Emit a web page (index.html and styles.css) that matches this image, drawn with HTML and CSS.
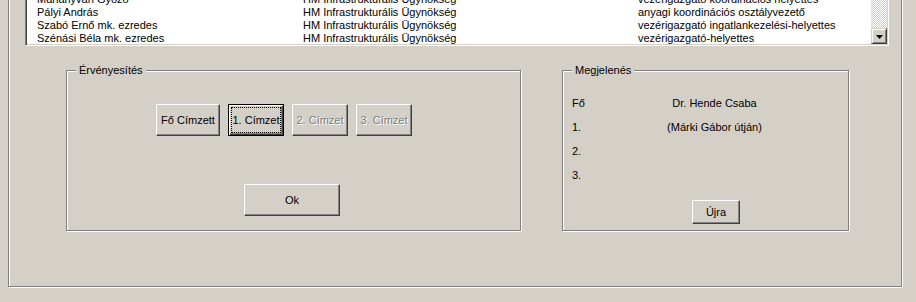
FILE: index.html
```html
<!DOCTYPE html>
<html lang="hu">
<head>
    <title>Érvényesítés</title>
    <meta charset="utf-8">
    <link rel="stylesheet" href="styles.css">
</head>
<body>
<div class="window">
    <div class="listbox">
        <div class="list">
            <div class="row"><span>Marianyván Győző</span><span>HM Infrastrukturális Ügynökség</span><span>vezérigazgató koordinációs helyettes</span></div>
            <div class="row"><span>Pályi András</span><span>HM Infrastrukturális Ügynökség</span><span>anyagi koordinációs osztályvezető</span></div>
            <div class="row"><span>Szabó Ernő mk. ezredes</span><span>HM Infrastrukturális Ügynökség</span><span>vezérigazgató ingatlankezelési-helyettes</span></div>
            <div class="row"><span>Szénási Béla mk. ezredes</span><span>HM Infrastrukturális Ügynökség</span><span>vezérigazgató-helyettes</span></div>
        </div>
        <div class="scrollbar">
            <div class="track"></div>
            <div class="scroll-btn">
                <svg width="7" height="4" viewBox="0 0 7 4"><polygon points="0,0 7,0 3.5,4" fill="#000"/></svg>
            </div>
        </div>
    </div>

    <div class="groups">
        <div class="group group-validate">
            <span class="group-title">Érvényesítés</span>
            <div class="btn-row">
                <button class="btn btn-wide" type="button">Fő Címzett</button>
                <button class="btn btn-default" type="button">1. Címzet</button>
                <button class="btn" type="button" disabled>2. Címzet</button>
                <button class="btn" type="button" disabled>3. Címzet</button>
            </div>
            <button class="btn btn-ok" type="button">Ok</button>
        </div>

        <div class="group group-view">
            <span class="group-title">Megjelenés</span>
            <div class="view-rows">
                <span>Fő</span><span class="view-value">Dr. Hende Csaba</span>
                <span>1.</span><span class="view-value">(Márki Gábor útján)</span>
                <span>2.</span><span class="view-value"></span>
                <span>3.</span><span class="view-value"></span>
            </div>
            <button class="btn btn-reset" type="button">Újra</button>
        </div>
    </div>
</div>
</body>
</html>
```

FILE: styles.css
```css
*, *::before, *::after {
    margin: 0;
    padding: 0;
    box-sizing: border-box;
}

body {
    height: 302px;
    overflow: hidden;
    background-color: #d4d0c8;
    color: #000000;
    font-family: "Liberation Sans", Arial, sans-serif;
    font-size: 11px;
}

.window {
    height: 313px;
    margin: -26px 14px 0 8px;
    padding: 15px 12px 0 16px;
    border: 1px solid #808080;
    box-shadow: inset 1px 1px 0 #ffffff, 1px 1px 0 #ffffff;
}

/* lista */
.listbox {
    display: flex;
    height: 56px;
    border: 1px solid;
    border-color: #808080 #ffffff #ffffff #808080;
    box-shadow: inset 1px 1px 0 #404040, inset -1px -1px 0 #d4d0c8;
    padding: 1px;
}

.list {
    flex: 1;
    background-color: #ffffff;
    padding-top: 1px;
}

.row {
    display: grid;
    grid-template-columns: 266px 335px 1fr;
    height: 13px;
    padding-left: 10px;
    line-height: 13px;
    white-space: nowrap;
}

.scrollbar {
    width: 16px;
    display: flex;
    flex-direction: column;
}

.track {
    flex: 1;
    background-image: conic-gradient(#ffffff 25%, #d4d0c8 0 50%, #ffffff 0 75%, #d4d0c8 0);
    background-size: 2px 2px;
}

.scroll-btn {
    height: 16px;
    display: flex;
    align-items: center;
    justify-content: center;
    background-color: #d4d0c8;
    border: 1px solid;
    border-color: #d4d0c8 #404040 #404040 #d4d0c8;
    box-shadow: inset 1px 1px 0 #ffffff, inset -1px -1px 0 #808080;
}

.scroll-btn svg {
    display: block;
    margin-top: 1px;
}

/* csoportok */
.groups {
    display: flex;
    gap: 41px;
    margin-top: 24px;
    padding-left: 41px;
}

.group {
    position: relative;
    height: 161px;
    border: 1px solid #808080;
    box-shadow: inset 1px 1px 0 #ffffff, 1px 1px 0 #ffffff;
}

.group-title {
    position: absolute;
    top: -7px;
    left: 9px;
    padding: 0 3px;
    line-height: 13px;
    background-color: #d4d0c8;
}

.group-validate {
    width: 455px;
    display: flex;
    flex-direction: column;
    align-items: flex-start;
    padding: 33px 0 0 89px;
}

.group-view {
    width: 287px;
    padding: 20px 0 0 9px;
}

/* gombok */
.btn {
    width: 56px;
    height: 32px;
    border: 1px solid;
    border-color: #ffffff #404040 #404040 #ffffff;
    box-shadow: inset -1px -1px 0 #808080;
    background-color: #d4d0c8;
    color: #000000;
    font-family: inherit;
    font-size: 11px;
    line-height: 13px;
}

.btn:disabled {
    color: #808080;
    text-shadow: 1px 1px 0 #ffffff;
}

.btn-default {
    border-color: #000000;
    box-shadow: inset 1px 1px 0 #ffffff, inset -1px -1px 0 #404040, inset -2px -2px 0 #808080;
    outline: 1px dotted #000000;
    outline-offset: -4px;
}

.btn-row {
    display: flex;
    gap: 8px;
}

.btn-wide {
    width: 64px;
}

.btn-ok {
    width: 96px;
    margin: 48px 0 0 88px;
}

.view-rows {
    display: grid;
    grid-template-columns: 40px 205px;
    grid-auto-rows: 24px;
    line-height: 24px;
}

.view-value {
    text-align: center;
}

.btn-reset {
    display: block;
    width: 48px;
    height: 24px;
    margin: 13px 0 0 120px;
}
```
